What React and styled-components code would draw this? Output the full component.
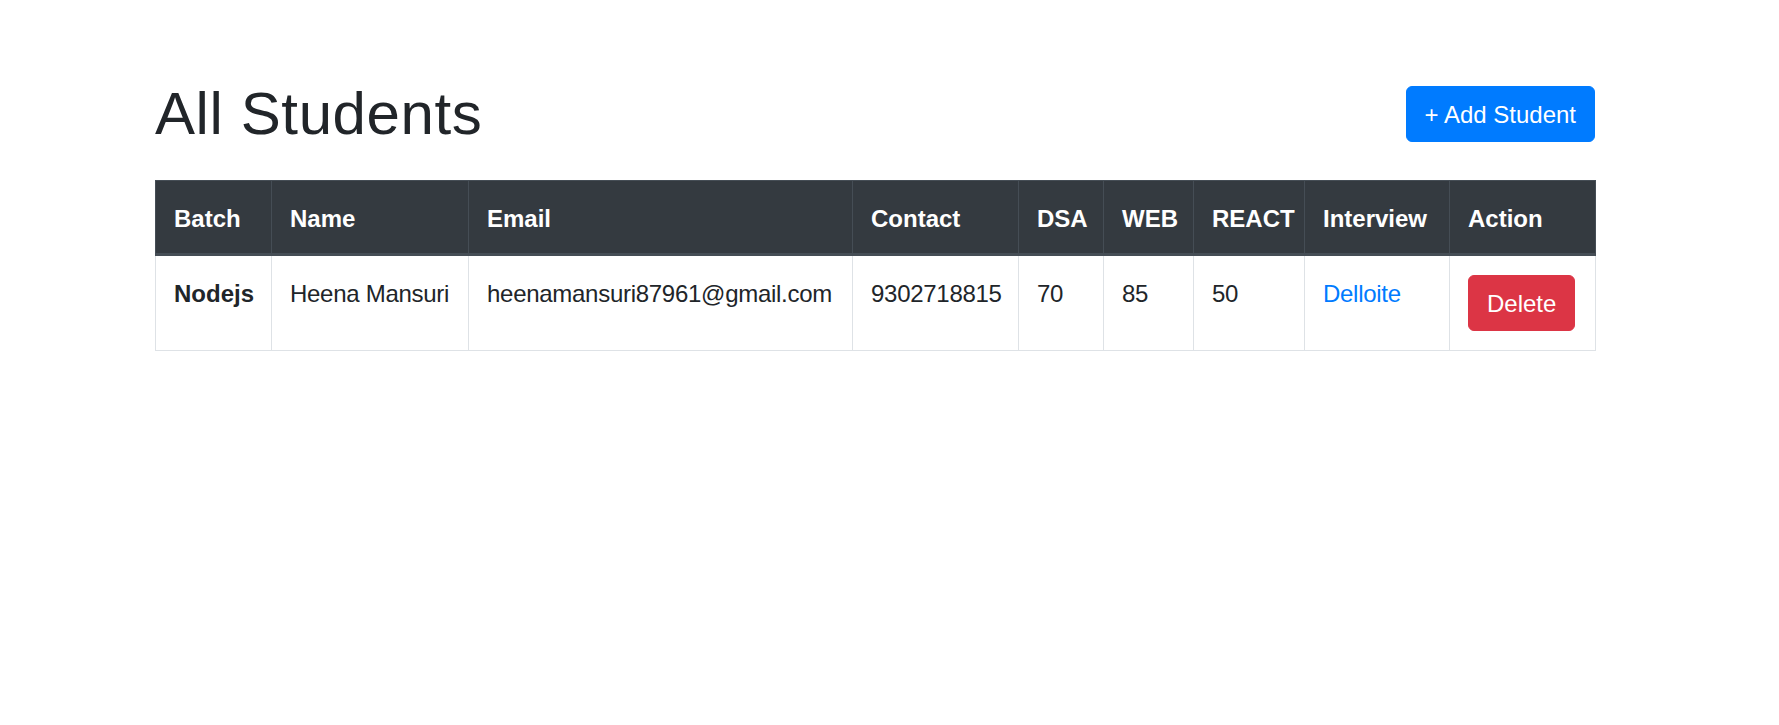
import React from 'react'
import styled, { createGlobalStyle } from 'styled-components'

const GlobalStyle = createGlobalStyle`
  body {
    margin: 0;
    background: #fff;
    color: #212529;
    font-family: "Liberation Sans", Arial, sans-serif;
  }
`

const Page = styled.div`
  padding-top: 78px;
`

const Container = styled.div`
  width: 1440px;
  margin-left: 155px;
`

const Header = styled.div`
  display: flex;
  align-items: center;
  justify-content: space-between;
  margin-bottom: 30px;
`

const Title = styled.h1`
  margin: 0;
  font-size: 60px;
  font-weight: 500;
  line-height: 72px;
  letter-spacing: 0.6px;
  color: #212529;
`

const Button = styled.button`
  font-family: inherit;
  font-size: 24px;
  line-height: 36px;
  padding: 10px 18px 8px;
  border: 1.5px solid ${p => p.color};
  border-radius: 6px;
  background: ${p => p.color};
  color: #fff;
  cursor: pointer;
`

const Table = styled.table`
  width: 1440px;
  table-layout: fixed;
  border-collapse: collapse;
  border: 1px solid #dee2e6;
  font-size: 24px;
  line-height: 36px;
`

const HeadCell = styled.th`
  background: #343a40;
  color: #fff;
  font-weight: 700;
  text-align: left;
  vertical-align: bottom;
  padding: 20px 18px 16px;
  border: 1px solid #454d55;
  border-bottom: 3px solid #454d55;
`

const Cell = styled.td`
  padding: 20px 18px 16px;
  vertical-align: top;
  border: 1px solid #dee2e6;
  font-weight: ${p => (p.bold ? 700 : 400)};
  letter-spacing: ${p => (p.bold ? 0 : -0.28)}px;
  white-space: nowrap;
`

const ActionCell = styled(Cell)`
  padding: 19px 18px;
`

const Link = styled.a`
  color: #007bff;
  text-decoration: none;
`

const columns = [
  { label: 'Batch', width: 116 },
  { label: 'Name', width: 197 },
  { label: 'Email', width: 384 },
  { label: 'Contact', width: 166 },
  { label: 'DSA', width: 85 },
  { label: 'WEB', width: 90 },
  { label: 'REACT', width: 111 },
  { label: 'Interview', width: 145 },
  { label: 'Action', width: 146 },
]

const students = [
  {
    batch: 'Nodejs',
    name: 'Heena Mansuri',
    email: 'heenamansuri87961@gmail.com',
    contact: '9302718815',
    dsa: 70,
    web: 85,
    react: 50,
    interview: 'Delloite',
  },
]

export default function App () {
  return (
    <Page>
      <GlobalStyle />
      <Container>
        <Header>
          <Title>All Students</Title>
          <Button color="#007bff">+ Add Student</Button>
        </Header>
        <Table>
          <colgroup>
            {columns.map(c => <col key={c.label} style={{ width: c.width }} />)}
          </colgroup>
          <thead>
            <tr>
              {columns.map(c => <HeadCell key={c.label}>{c.label}</HeadCell>)}
            </tr>
          </thead>
          <tbody>
            {students.map(s => (
              <tr key={s.email}>
                <Cell bold>{s.batch}</Cell>
                <Cell>{s.name}</Cell>
                <Cell>{s.email}</Cell>
                <Cell>{s.contact}</Cell>
                <Cell>{s.dsa}</Cell>
                <Cell>{s.web}</Cell>
                <Cell>{s.react}</Cell>
                <Cell><Link href="#">{s.interview}</Link></Cell>
                <ActionCell><Button color="#dc3545">Delete</Button></ActionCell>
              </tr>
            ))}
          </tbody>
        </Table>
      </Container>
    </Page>
  )
}
